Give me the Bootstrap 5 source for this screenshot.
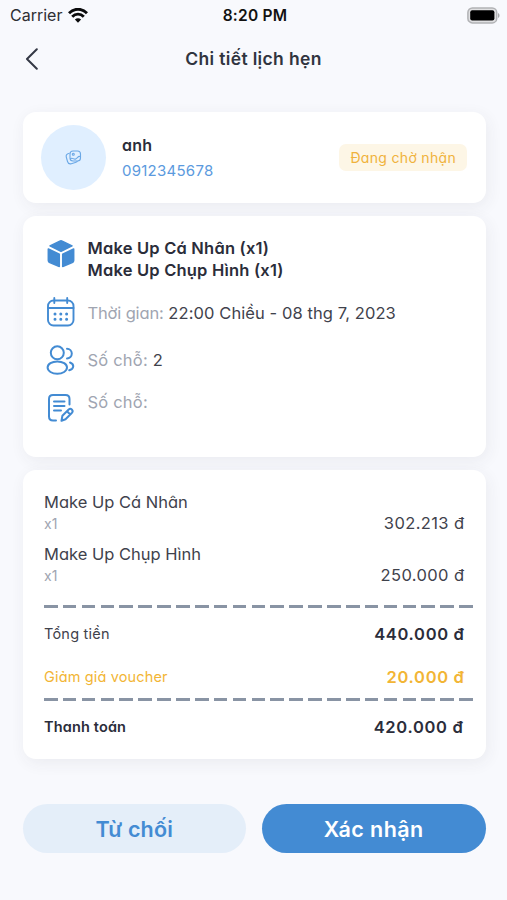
<!DOCTYPE html>
<html lang="vi">
<head>
<meta charset="utf-8">
<meta name="viewport" content="width=device-width, initial-scale=1">
<title>Chi tiết lịch hẹn</title>
<link rel="stylesheet" href="https://cdn.jsdelivr.net/npm/bootstrap@5.3.0/dist/css/bootstrap.min.css">
<style>
:root{--blue:#438bd3;--ink:#2b2d3a;--soft-ink:#3f424c;--muted:#a0a5b1;--amber:#f2b535}
body{background:#f8f9fd;font-family:Inter,"Liberation Sans",sans-serif;font-feature-settings:"cv11";color:var(--ink);min-height:900px}
main{padding:0 21.5px 0 22.5px}
.statusbar{height:30px;padding:0 7px 0 10px;font-feature-settings:normal;color:#111;line-height:30px}
.carrier{font-size:16px;color:#2e2f33}
.wifi{margin-left:6px}
.clock{font-size:15.5px;font-weight:600;letter-spacing:.25px;padding-top:1px}
.side{flex:1 1 0}
.topbar{height:58px;padding:0 25px}
.title-text{font-size:17.5px;font-weight:600;color:#30343f;line-height:24px;letter-spacing:.35px}
.panel{background:#fff;border-radius:13px;box-shadow:2px 4px 16px rgba(50,50,65,.07)}
.customer{height:91px;margin-top:24px;padding:0 18.5px}
.avatar{width:65px;height:65px;background:#e0efff}
.name-text{font-size:16px;font-weight:600;line-height:25px;letter-spacing:.2px}
.phone{font-size:15px;line-height:25px;color:#5b9ade;letter-spacing:.25px}
.pending{font-size:14px;line-height:27px;height:27px;border-radius:7px;background:#fdf6e6;color:#f0b23c;padding:0 11px;letter-spacing:.32px}
.booking{height:241px;margin-top:13px;padding:20px 22px 0}
.ico{width:32px;flex:none}
.service,.info{margin-left:11px}
.service{font-size:16.5px;font-weight:600;line-height:22px;letter-spacing:.2px;padding-top:.5px}
.info{font-size:16.5px;line-height:24px;color:var(--soft-ink);letter-spacing:.09px}
.info span{color:var(--muted)}
.t-time span{letter-spacing:-.15px}
.t-seat{letter-spacing:.2px}
.r-time{margin-top:16.5px;height:30px}
.t-time{padding-top:1px}
.r-seat{margin-top:18px;height:30px}
.r-note{margin-top:15px}
.note-ico{margin-top:3px}
.invoice{height:289px;margin-top:13px;padding:21px 21.5px 0}
.line{line-height:22px}
.item-name{font-size:16.5px;color:var(--soft-ink)}
.qty{font-size:14px;color:var(--muted)}
.price{font-size:16.5px;color:var(--soft-ink);letter-spacing:.38px;margin-right:-.4px}
.item-price{padding-bottom:1px}
.sum{font-size:16.5px;font-weight:600;letter-spacing:.68px;margin-right:-.6px}
.label-text{font-size:14.5px;letter-spacing:.15px}
.l-total{color:var(--soft-ink);letter-spacing:.22px}
.amber{color:var(--amber)}
.dashes{height:3px;margin-right:-10px;background:repeating-linear-gradient(90deg,#8994a4 0 13.6px,transparent 13.6px 18.87px)}
.d1{margin-top:18px}
.d2{margin-top:10px}
.total-row{margin-top:15px}
.voucher-row{margin-top:21px}
.pay-sum{margin-right:.6px}
.actions{margin-top:45px;gap:16px}
.pill{flex:1 1 0;height:49px;border:0;border-radius:25px;font-size:21.5px;font-weight:600;line-height:50px;padding:0}
.pill-soft,.pill-soft:hover{background:#e4eef9;color:var(--blue);letter-spacing:.15px}
.pill-main,.pill-main:hover{background:var(--blue);color:#fff;letter-spacing:.45px}
</style>
</head>
<body>
<header>
  <div class="statusbar d-flex align-items-center">
    <div class="side d-flex align-items-center">
      <span class="carrier">Carrier</span>
      <svg class="wifi" width="20" height="15" viewBox="0 0 20 15" fill="none" stroke="#0b0b0c" stroke-width="2.900"><path d="M1 5.300C6-.1 14-.1 19 5.300M4.200 8.700c3.300-3.400 8.300-3.400 11.600 0"/><path d="M6.900 11.600c1.800-1.700 4.400-1.700 6.200 0L10 14.700z" fill="#0b0b0c" stroke="none"/></svg>
    </div>
    <span class="clock">8:20 PM</span>
    <div class="side d-flex justify-content-end">
      <svg class="mt-n1" width="33" height="17" viewBox="0 0 33 17"><rect x=".9" y=".9" width="28.800" height="15" rx="4.500" fill="#e0e0e2" stroke="#b1b2b5" stroke-width="1.500"/><rect x="3.200" y="3.200" width="24.200" height="10.400" rx="2" fill="#000"/><path d="M31 6v5c2-.7 2-4.300 0-5" fill="#a9aaad"/></svg>
    </div>
  </div>
  <div class="topbar d-flex align-items-center">
    <div class="side"><svg class="d-block" width="14" height="22" viewBox="0 0 14 22" fill="none" stroke="#343845" stroke-width="2" stroke-linecap="round" stroke-linejoin="round"><path d="M11.800 1.300 2 11l9.800 9.700"/></svg></div>
    <h1 class="title-text m-0">Chi tiết lịch hẹn</h1>
    <div class="side"></div>
  </div>
</header>
<main>
  <section class="panel customer d-flex align-items-center">
    <div class="avatar rounded-circle d-flex align-items-center justify-content-center">
      <svg width="17" height="15" viewBox="0 0 17 15" fill="none" stroke="#6ba8e6" stroke-width="1.100"><rect x="5" y="1" width="10.500" height="10" rx="3"/><path d="M4.500 3.300C1.200 4 .8 5.300 1.400 7.500l1.100 4c.6 2.200 1.800 2.700 3.800 2.200l4-1.200c1.300-.4 1.900-.8 2.200-1.500M5.200 9c2.200-2.400 3.200 1 5.500 0s2.300-3.600 4.800-2.300"/><circle cx="8.300" cy="4.300" r="1"/></svg>
    </div>
    <div class="ms-3 me-auto">
      <div class="name-text">anh</div>
      <div class="phone">0912345678</div>
    </div>
    <span class="pending">Đang chờ nhận</span>
  </section>

  <section class="panel booking">
    <div class="d-flex">
      <div class="ico"><svg class="d-block mt-1" width="32" height="28" viewBox="0 0 32 28" fill="#438bd3" stroke="#438bd3" stroke-width="1.500" stroke-linejoin="round"><path d="M14.800 1.100Q16 .6 17.200 1.100L27 5.900 16 11.200 5 5.900z"/><path d="M3.300 9 14.300 14.200V26.500L4.800 22.600Q3.300 22 3.300 20.500zM28.700 9 17.700 14.200V26.500l9.500-3.900q1.500-.6 1.500-2.100z"/></svg></div>
      <div class="service"><div>Make Up Cá Nhân (x1)</div><div>Make Up Chụp Hình (x1)</div></div>
    </div>
    <div class="d-flex align-items-center r-time">
      <div class="ico"><svg class="d-block" width="32" height="30" viewBox="0 0 32 30" fill="none" stroke="#438bd3" stroke-width="1.900" stroke-linecap="round"><rect x="3" y="3.500" width="25.500" height="25" rx="5.500"/><path d="M3 11h25.500M9.300 1v5M22.200 1v5"/><path d="M10 17h.01M15.800 17h.01M21.600 17h.01M10 22.300h.01M15.800 22.300h.01M21.600 22.300h.01" stroke-width="3"/></svg></div>
      <div class="info t-time"><span>Thời gian:</span> 22:00 Chiều - 08 thg 7, 2023</div>
    </div>
    <div class="d-flex align-items-center r-seat">
      <div class="ico"><svg class="d-block" width="32" height="30" viewBox="0 0 32 30" fill="none" stroke="#438bd3" stroke-width="2" stroke-linecap="round"><circle cx="12.300" cy="7.800" r="6.500"/><ellipse cx="12.300" cy="22.600" rx="9.700" ry="6.200"/><path d="M22 3.800a4.800 4.800 0 0 1 0 9.600M25 17.500c4.600 1.700 4.300 6.400-.8 7.800"/></svg></div>
      <div class="info t-seat"><span>Số chỗ:</span> 2</div>
    </div>
    <div class="d-flex r-note">
      <div class="ico"><svg class="d-block note-ico" width="32" height="30" viewBox="0 0 32 30" fill="none" stroke="#438bd3" stroke-width="2" stroke-linecap="round" stroke-linejoin="round"><path d="M11 27.500H8q-4 0-4-4V6q0-4 4-4h12.500q4 0 4 4v5.500M9 8.500h10.500M9 13h10.500M9 17.500h7"/><path d="m16.500 27.800.9-5 6.300-6.300q1.600-1.400 3.100 0 1.600 1.600.2 3.200l-6.500 6.600zM22 18.300l3.200 3.200"/></svg></div>
      <div class="info t-seat"><span>Số chỗ:</span></div>
    </div>
  </section>

  <section class="panel invoice">
    <div class="d-flex justify-content-between align-items-end line mb-2">
      <div><div class="item-name">Make Up Cá Nhân</div><div class="qty">x1</div></div>
      <div class="price item-price">302.213 đ</div>
    </div>
    <div class="d-flex justify-content-between align-items-end line">
      <div><div class="item-name">Make Up Chụp Hình</div><div class="qty">x1</div></div>
      <div class="price item-price">250.000 đ</div>
    </div>
    <div class="dashes d1"></div>
    <div class="d-flex justify-content-between line total-row"><span class="label-text l-total">Tổng tiền</span><span class="sum">440.000 đ</span></div>
    <div class="d-flex justify-content-between line amber voucher-row"><span class="label-text">Giảm giá voucher</span><span class="sum">20.000 đ</span></div>
    <div class="dashes d2"></div>
    <div class="d-flex justify-content-between line total-row"><span class="label-text fw-semibold">Thanh toán</span><span class="sum pay-sum">420.000 đ</span></div>
  </section>

  <div class="actions d-flex">
    <button type="button" class="btn pill pill-soft">Từ chối</button>
    <button type="button" class="btn pill pill-main">Xác nhận</button>
  </div>
</main>
<script src="https://cdn.jsdelivr.net/npm/bootstrap@5.3.0/dist/js/bootstrap.bundle.min.js"></script>
</body>
</html>
